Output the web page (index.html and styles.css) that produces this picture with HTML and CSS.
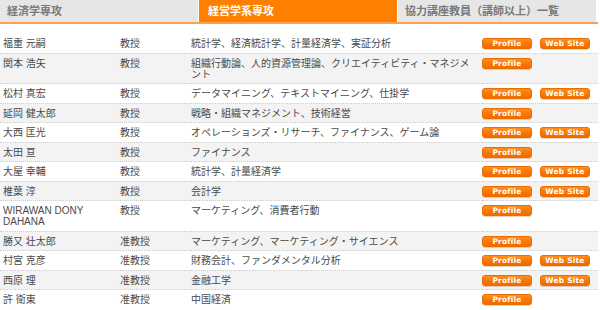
FILE: index.html
```html
<!DOCTYPE html>
<html lang="ja">
<head>
<meta charset="utf-8">
<title>教員一覧</title>
<link rel="stylesheet" href="styles.css">
</head>
<body>
<div class="page">
  <ul class="tabs">
    <li class="tab">経済学専攻</li>
    <li class="tab tab-active">経営学系専攻</li>
    <li class="tab">協力講座教員（講師以上）一覧</li>
  </ul>
  <table class="staff">
    <colgroup>
      <col class="c-name"><col class="c-pos"><col class="c-field"><col class="c-links">
    </colgroup>
    <tbody>
      <tr><td class="name">福重 元嗣</td><td class="pos">教授</td><td class="field">統計学、経済統計学、計量経済学、実証分析</td><td class="links"><div class="btns"><a class="btn">Profile</a><a class="btn">Web Site</a></div></td></tr>
      <tr><td class="name">関本 浩矢</td><td class="pos">教授</td><td class="field">組織行動論、人的資源管理論、クリエイティビティ・マネジメント</td><td class="links"><div class="btns"><a class="btn">Profile</a></div></td></tr>
      <tr><td class="name">松村 真宏</td><td class="pos">教授</td><td class="field">データマイニング、テキストマイニング、仕掛学</td><td class="links"><div class="btns"><a class="btn">Profile</a><a class="btn">Web Site</a></div></td></tr>
      <tr><td class="name">延岡 健太郎</td><td class="pos">教授</td><td class="field">戦略・組織マネジメント、技術経営</td><td class="links"><div class="btns"><a class="btn">Profile</a></div></td></tr>
      <tr><td class="name">大西 匡光</td><td class="pos">教授</td><td class="field">オペレーションズ・リサーチ、ファイナンス、ゲーム論</td><td class="links"><div class="btns"><a class="btn">Profile</a><a class="btn">Web Site</a></div></td></tr>
      <tr><td class="name">太田 亘</td><td class="pos">教授</td><td class="field">ファイナンス</td><td class="links"><div class="btns"><a class="btn">Profile</a></div></td></tr>
      <tr><td class="name">大屋 幸輔</td><td class="pos">教授</td><td class="field">統計学、計量経済学</td><td class="links"><div class="btns"><a class="btn">Profile</a><a class="btn">Web Site</a></div></td></tr>
      <tr><td class="name">椎葉 淳</td><td class="pos">教授</td><td class="field">会計学</td><td class="links"><div class="btns"><a class="btn">Profile</a><a class="btn">Web Site</a></div></td></tr>
      <tr><td class="name">WIRAWAN DONY DAHANA</td><td class="pos">教授</td><td class="field">マーケティング、消費者行動</td><td class="links"><div class="btns"><a class="btn">Profile</a></div></td></tr>
      <tr><td class="name">勝又 壮太郎</td><td class="pos">准教授</td><td class="field">マーケティング、マーケティング・サイエンス</td><td class="links"><div class="btns"><a class="btn">Profile</a></div></td></tr>
      <tr><td class="name">村宮 克彦</td><td class="pos">准教授</td><td class="field">財務会計、ファンダメンタル分析</td><td class="links"><div class="btns"><a class="btn">Profile</a><a class="btn">Web Site</a></div></td></tr>
      <tr><td class="name">西原 理</td><td class="pos">准教授</td><td class="field">金融工学</td><td class="links"><div class="btns"><a class="btn">Profile</a><a class="btn">Web Site</a></div></td></tr>
      <tr><td class="name">許 衛東</td><td class="pos">准教授</td><td class="field">中国経済</td><td class="links"><div class="btns"><a class="btn">Profile</a></div></td></tr>
    </tbody>
  </table>
</div>
</body>
</html>
```
FILE: styles.css
```css
html, body {
  margin: 0;
  padding: 0;
  background: #ffffff;
}

body {
  font-family: "Liberation Sans", "Noto Sans CJK JP", sans-serif;
  color: #4a4a4a;
}

.page {
  width: 598px;
}

.tabs {
  list-style: none;
  margin: 0;
  padding: 0;
  display: flex;
  gap: 1px;
  border-bottom: 2px solid #f8a352;
}

.tab {
  width: 198px;
  height: 22px;
  line-height: 22px;
  padding-left: 7px;
  box-sizing: border-box;
  background: #e6e6e6;
  color: #7a7a7a;
  font-size: 11px;
  font-weight: bold;
  white-space: nowrap;
}

.tab-active {
  background: #ff7f00;
  color: #ffffff;
  padding-left: 9px;
}

.staff {
  width: 598px;
  margin-top: 10px;
  border-collapse: collapse;
  table-layout: fixed;
  font-size: 10px;
  line-height: 11px;
}

.c-name { width: 120px; }
.c-pos { width: 71px; }
.c-field { width: 291px; }
.c-links { width: 116px; }

.staff tr {
  border-bottom: 1px dotted #cfcfcf;
}

.staff tr:last-child {
  border-bottom: none;
}

.staff tr:nth-child(even) {
  background: #f3f3f3;
}

.staff td {
  vertical-align: top;
  padding: 4px 0 3.5px 0;
}

.staff td.name {
  padding-left: 3px;
}

.staff td.field {
  padding-right: 8px;
}

.btns {
  display: flex;
  gap: 8px;
}

.btn {
  display: block;
  width: 50px;
  height: 11px;
  box-sizing: border-box;
  border: 1px solid #e96d00;
  border-radius: 3px;
  background: linear-gradient(#ff8f1f, #f97400 60%, #ef6c00);
  color: #ffffff;
  font-family: "DejaVu Sans", sans-serif;
  font-weight: bold;
  font-size: 7.5px;
  line-height: 9px;
  text-align: center;
  letter-spacing: 0.2px;
  box-shadow: 0 1px 0 rgba(180, 80, 0, 0.25);
}
```
